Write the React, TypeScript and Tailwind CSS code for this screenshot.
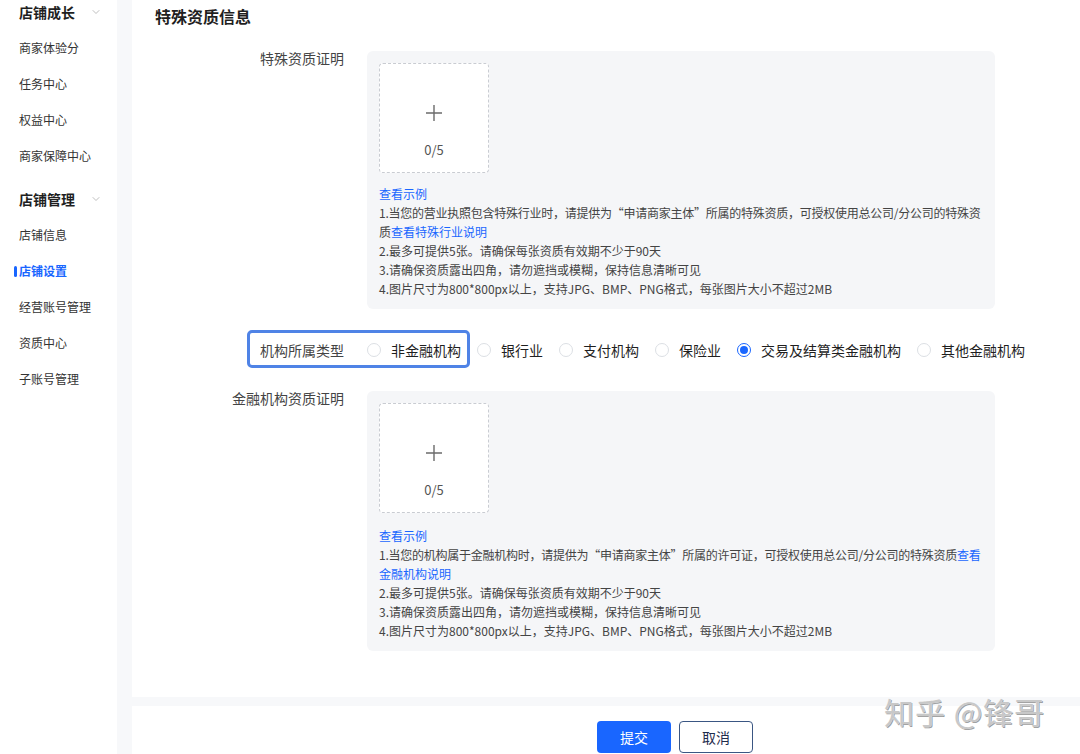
import { ChevronDown } from 'lucide-react'

const FONT = { fontFamily: '"Noto Sans CJK SC", "Noto Sans", sans-serif' }

const NAV = [
  { title: '店铺成长', items: ['商家体验分', '任务中心', '权益中心', '商家保障中心'] },
  { title: '店铺管理', items: ['店铺信息', '店铺设置', '经营账号管理', '资质中心', '子账号管理'] },
]

const ORG_TYPES = ['非金融机构', '银行业', '支付机构', '保险业', '交易及结算类金融机构', '其他金融机构']

function Sidebar() {
  return (
    <aside className="w-[117px] shrink-0 bg-white">
      {NAV.map((group, gi) => (
        <div key={group.title} className={gi === 0 ? 'pt-[1px]' : 'pt-[14px]'}>
          <div className="flex h-[22px] items-center pl-[19px]">
            <span className="text-[14px] font-bold text-[#1f1f1f]">{group.title}</span>
            <ChevronDown className="ml-[15px] h-[12px] w-[12px] text-[#aaa]" strokeWidth={1.5} />
          </div>
          <ul className="mt-[7px]">
            {group.items.map((it) => {
              const active = it === '店铺设置'
              return (
                <li key={it} className="relative flex h-[36px] items-center pl-[19px]">
                  {active && <span className="absolute left-[14px] top-[13px] h-[11px] w-[3px] rounded-full bg-[#1966ff]" />}
                  <span className={active ? 'text-[12px] font-semibold text-[#1966ff]' : 'text-[12px] text-[#333]'}>{it}</span>
                </li>
              )
            })}
          </ul>
        </div>
      ))}
    </aside>
  )
}

function Upload() {
  return (
    <div className="flex h-[110px] w-[110px] flex-col items-center rounded-[4px] border border-dashed border-[#c9ccd2] bg-white pt-[39px]">
      <svg width="20" height="20" viewBox="0 0 20 20">
        <path d="M10 2v16M2 10h16" stroke="#6b6b6b" strokeWidth="1.4" />
      </svg>
      <span className="mt-[17px] text-[13px] leading-[19px] text-[#555]">0/5</span>
    </div>
  )
}

function Link({ children }: { children: React.ReactNode }) {
  return <span className="text-[#1966ff]">{children}</span>
}

function Notes({ first, gap }: { first: React.ReactNode; gap: string }) {
  return (
    <div className={`${gap} whitespace-nowrap text-[12px] leading-[19px] text-[#444]`}>
      <div>
        <Link>查看示例</Link>
      </div>
      {first}
      <div>2.最多可提供5张。请确保每张资质有效期不少于90天</div>
      <div>3.请确保资质露出四角，请勿遮挡或模糊，保持信息清晰可见</div>
      <div>4.图片尺寸为800*800px以上，支持JPG、BMP、PNG格式，每张图片大小不超过2MB</div>
    </div>
  )
}

function FormRow({ label, children }: { label: string; children: React.ReactNode }) {
  return (
    <div className="flex">
      <div className="w-[212px] shrink-0 text-right text-[14px] leading-[14px] text-[#444]">{label}</div>
      <div className="ml-[23px] w-[628px] rounded-[6px] bg-[#f5f6f8] px-[12px] pb-[11px] pt-[12px]">{children}</div>
    </div>
  )
}

function Radio({ label, checked }: { label: string; checked?: boolean }) {
  return (
    <label className="mr-[16px] flex items-center">
      <span
        className={
          checked
            ? 'flex h-[14px] w-[14px] items-center justify-center rounded-full border border-[#1966ff] bg-white'
            : 'h-[14px] w-[14px] rounded-full border border-[#dcdfe4] bg-white'
        }
      >
        {checked && <span className="h-[8px] w-[8px] rounded-full bg-[#1966ff]" />}
      </span>
      <span className="ml-[10px] text-[14px] text-[#1f1f1f]">{label}</span>
    </label>
  )
}

export default function App() {
  return (
    <div className="relative flex h-[754px] w-[1080px] overflow-hidden bg-[#f7f8fa]" style={FONT}>
      <Sidebar />
      <main className="ml-[15px] flex flex-1 flex-col">
        <section className="h-[697px] bg-white">
          <h2 className="pl-[23px] pt-[5px] text-[16px] font-bold leading-[22px] text-[#1f1f1f]">特殊资质信息</h2>
          <div className="mt-[24px]">
            <FormRow label="特殊资质证明">
              <Upload />
              <Notes
                gap="mt-[11px]"
                first={
                  <>
                    <div className="tracking-[-0.25px]">
                      1.当您的营业执照包含特殊行业时，请提供为“申请商家主体”所属的特殊资质，可授权使用总公司/分公司的特殊资
                    </div>
                    <div>
                      质<Link>查看特殊行业说明</Link>
                    </div>
                  </>
                }
              />
            </FormRow>
          </div>

          <div className="relative my-[22px] flex h-[38px] items-center">
            <div className="w-[212px] shrink-0 text-right text-[14px] text-[#444]">机构所属类型</div>
            <div className="ml-[23px] flex items-center">
              {ORG_TYPES.map((t) => (
                <Radio key={t} label={t} checked={t === '交易及结算类金融机构'} />
              ))}
            </div>
            <div className="pointer-events-none absolute left-[115px] top-[-1px] h-[38px] w-[223px] rounded-[5px] border-[3px] border-[#4f83e6]" />
          </div>

          <FormRow label="金融机构资质证明">
            <Upload />
            <Notes
              gap="mt-[13px]"
              first={
                <>
                  <div className="tracking-[-0.25px]">
                    1.当您的机构属于金融机构时，请提供为“申请商家主体”所属的许可证，可授权使用总公司/分公司的特殊资质<Link>查看</Link>
                  </div>
                  <div>
                    <Link>金融机构说明</Link>
                  </div>
                </>
              }
            />
          </FormRow>
        </section>

        <footer className="mt-[9px] flex flex-1 items-start bg-white pl-[465px] pt-[15px]">
          <button className="h-[32px] w-[74px] rounded-[4px] bg-[#1966ff] text-[14px] text-white">提交</button>
          <button className="ml-[8px] h-[32px] w-[74px] rounded-[4px] border border-[#3a5683] bg-white text-[14px] text-[#1f2d4d]">
            取消
          </button>
        </footer>
      </main>

      <div
        className="pointer-events-none absolute left-[884px] top-[691px] text-[30px] leading-[40px] tracking-[1px] text-[#c8c8c8]"
        style={{ textShadow: '0 0 1px #fff, 1px 1px 0 #999' }}
      >
        知乎 @锋哥
      </div>
    </div>
  )
}
